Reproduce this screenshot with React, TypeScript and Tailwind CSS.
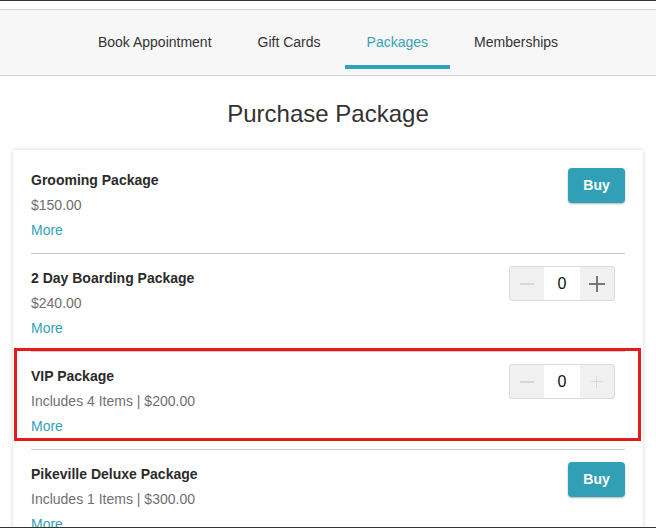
import React from 'react';

type PackageItem = {
  name: string;
  detail: string;
  kind: 'buy' | 'stepper';
  plusDisabled?: boolean;
  highlighted?: boolean;
};

const TABS = ['Book Appointment', 'Gift Cards', 'Packages', 'Memberships'];

const PACKAGES: PackageItem[] = [
  { name: 'Grooming Package', detail: '$150.00', kind: 'buy' },
  { name: '2 Day Boarding Package', detail: '$240.00', kind: 'stepper' },
  { name: 'VIP Package', detail: 'Includes 4 Items | $200.00', kind: 'stepper', plusDisabled: true, highlighted: true },
  { name: 'Pikeville Deluxe Package', detail: 'Includes 1 Items | $300.00', kind: 'buy' },
];

function Stepper({ plusDisabled }: { plusDisabled?: boolean }) {
  return (
    <div className="mr-[10px] flex h-[35px] w-[106px] overflow-hidden rounded-[3px] border border-[#dcdcdc] bg-[#f0f0f0]">
      <button type="button" className="flex w-[35px] items-center justify-center">
        <span className="block h-[2px] w-[14px] bg-[#d6d6d6]" />
      </button>
      <div className="flex w-[36px] items-center justify-center bg-white text-[16px] text-[#111]">0</div>
      <button type="button" className="relative flex w-[35px] items-center justify-center">
        {plusDisabled ? (
          <span className="relative block h-[12px] w-[12px]">
            <span className="absolute left-0 top-[5px] h-[1px] w-[12px] bg-[#dadada]" />
            <span className="absolute left-[5px] top-0 h-[12px] w-[1px] bg-[#dadada]" />
          </span>
        ) : (
          <span className="relative block h-[16px] w-[16px]">
            <span className="absolute left-0 top-[7px] h-[2px] w-[16px] bg-[#777]" />
            <span className="absolute left-[7px] top-0 h-[16px] w-[2px] bg-[#777]" />
          </span>
        )}
      </button>
    </div>
  );
}

function PackageRow({ item }: { item: PackageItem }) {
  return (
    <div className="relative flex justify-between border-b border-[#cccccc] pb-[10px] pt-[12px]">
      <div className="text-[14px] leading-[25px]">
        <div className="font-bold text-[#2b2b2b]">{item.name}</div>
        <div className="text-[#6f6f6f]">{item.detail}</div>
        <a className="text-[#31a2b8]">More</a>
      </div>
      <div>
        {item.kind === 'buy' ? (
          <button
            type="button"
            className="h-[35px] w-[57px] rounded-[4px] bg-[#31a0b7] text-[14px] font-bold text-white shadow-[0_1px_2px_rgba(0,0,0,0.3)]"
          >
            Buy
          </button>
        ) : (
          <Stepper plusDisabled={item.plusDisabled} />
        )}
      </div>
      {item.highlighted && (
        <div className="pointer-events-none absolute bottom-[8px] left-[-17px] right-[-16px] top-[-4px] border-[3px] border-[#e31b1b]" />
      )}
    </div>
  );
}

export default function App() {
  return (
    <div className="box-border h-[528px] overflow-hidden border-y border-[#333] bg-white font-['Liberation_Sans',Arial,sans-serif]">
      <div className="mt-[8px] border-y border-[#d4d4d4] bg-[#f7f7f7]">
        <nav className="flex h-[65px] justify-center gap-[2px]">
          {TABS.map(tab => {
            const active = tab === 'Packages';
            return (
              <div key={tab} className="relative flex items-center px-[22px] pb-[1px] text-[14px]">
                <span className={active ? 'text-[#3aa3b9]' : 'text-[#333]'}>{tab}</span>
                {active && <span className="absolute bottom-[6px] left-0 right-0 h-[4px] bg-[#31a2b8]" />}
              </div>
            );
          })}
        </nav>
      </div>

      <h1 className="pb-[20px] pt-[22px] text-center text-[24px] leading-[32px] text-[#333]">Purchase Package</h1>

      <div className="mx-[13px] bg-white px-[18px] pt-[6px] shadow-[0_0_4px_rgba(0,0,0,0.18)]">
        {PACKAGES.map(item => (
          <PackageRow key={item.name} item={item} />
        ))}
      </div>
    </div>
  );
}
